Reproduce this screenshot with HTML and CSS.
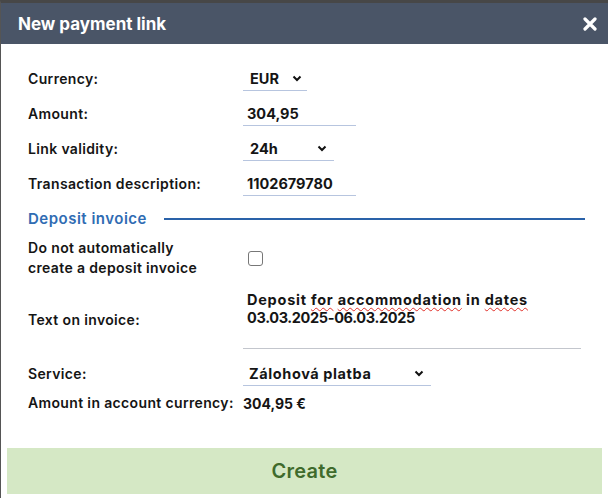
FILE: index.html
```html
<!DOCTYPE html>
<html lang="en">
<head>
<meta charset="utf-8">
<title>New payment link</title>
<link rel="stylesheet" href="styles.css">
</head>
<body>
<div class="modal">
  <header class="modal-head">
    <h1 class="modal-title">New payment link</h1>
    <button class="close" type="button" aria-label="Close">
      <svg width="14" height="14" viewBox="0 0 14 14"><path d="M2 2 L12 12 M12 2 L2 12" stroke="#fff" stroke-width="3.2" stroke-linecap="round"/></svg>
    </button>
  </header>
  <div class="modal-body">
    <div class="row row-first">
      <span class="label">Currency:</span>
      <div class="field select w-cur"><span>EUR</span><svg class="chev" width="10" height="7" viewBox="0 0 10 7"><path d="M1.5 1.5 L5 5 L8.5 1.5" fill="none" stroke="#111" stroke-width="2"/></svg></div>
    </div>
    <div class="row">
      <span class="label">Amount:</span>
      <div class="field input w-num"><span>304,95</span></div>
    </div>
    <div class="row">
      <span class="label">Link validity:</span>
      <div class="field select w-link"><span>24h</span><svg class="chev" width="10" height="7" viewBox="0 0 10 7"><path d="M1.5 1.5 L5 5 L8.5 1.5" fill="none" stroke="#111" stroke-width="2"/></svg></div>
    </div>
    <div class="row">
      <span class="label">Transaction description:</span>
      <div class="field input w-num"><span>1102679780</span></div>
    </div>
    <div class="section">
      <span class="section-title">Deposit invoice</span>
      <span class="section-line"></span>
    </div>
    <div class="row row-check">
      <span class="label">Do not automatically<br>create a deposit invoice</span>
      <span class="checkbox"></span>
    </div>
    <div class="row row-text">
      <span class="label">Text on invoice:</span>
      <div class="textarea"><span class="line-words">Deposit <u>for</u> <u>accommodation</u> in <u>dates</u></span><br><span class="line-dates">03.03.2025-06.03.2025</span></div>
    </div>
    <div class="row row-service">
      <span class="label">Service:</span>
      <div class="field select w-service"><span class="service-text">Zálohová platba</span><svg class="chev" width="10" height="7" viewBox="0 0 10 7"><path d="M1.5 1.5 L5 5 L8.5 1.5" fill="none" stroke="#111" stroke-width="2"/></svg></div>
    </div>
    <div class="row row-amount">
      <span class="label">Amount in account currency:</span>
      <span class="value">304,95 €</span>
    </div>
  </div>
  <div class="modal-foot">
    <button class="create" type="button">Create</button>
  </div>
</div>
</body>
</html>
```
FILE: styles.css
```css
* { box-sizing: border-box; }
html, body { margin: 0; padding: 0; background: #fff; }
body {
  font-family: "Inter", "Noto Sans", sans-serif;
  color: #151515;
  font-size: 14px;
}
.modal {
  width: 608px;
  height: 498px;
  border-top: 3px solid #474747;
  border-left: 1px solid #555;
  background: #fff;
  display: flex;
  flex-direction: column;
}
.modal-head {
  height: 41px;
  background: #4a5567;
  display: flex;
  align-items: center;
  justify-content: space-between;
  padding: 0 10px 0 17px;
}
.modal-title {
  margin: 0;
  color: #fff;
  font-size: 17px;
  font-weight: 700;
}
.close {
  border: 0;
  background: transparent;
  padding: 0;
  width: 16px;
  height: 16px;
  display: flex;
  align-items: center;
  justify-content: center;
}
.modal-body {
  padding: 22px 0 0 27px;
  display: flex;
  flex-direction: column;
}
.row {
  display: flex;
  align-items: center;
  margin-top: 10px;
}
.row-first { margin-top: 0; }
.label {
  width: 215px;
  flex: none;
  font-weight: 600;
  line-height: 20px;
  letter-spacing: 0.35px;
}
.field {
  height: 25px;
  border-bottom: 1px solid #b7c5df;
  display: flex;
  align-items: center;
  font-weight: 700;
  font-size: 14.5px;
}
.select { padding: 0 5px 0 7px; justify-content: space-between; }
.input { padding-left: 4px; }
.w-cur { width: 64px; }
.w-num { width: 113px; }
.w-link { width: 91px; padding-right: 7px; }
.w-service { width: 188px; padding-left: 6px; padding-right: 7px; }
.service-text { letter-spacing: 0.6px; }
.chev { flex: none; }
.section {
  margin-top: 12px;
  height: 20px;
  display: flex;
  align-items: center;
  padding-right: 23px;
}
.section-title {
  color: #2f6cb3;
  font-weight: 600;
  font-size: 15px;
  letter-spacing: 0.5px;
  white-space: nowrap;
}
.section-line {
  flex: 1;
  height: 2px;
  background: #2a62a9;
  margin-left: 17px;
  margin-top: 2px;
}
.checkbox {
  width: 15px;
  height: 15px;
  border: 1px solid #777;
  border-radius: 3px;
  margin-left: 5px;
  margin-top: 1px;
}
.row-text .label { margin-top: 3px; }
.textarea {
  width: 338px;
  height: 61px;
  border-bottom: 1px solid #c3c6cd;
  padding: 3px 0 0 4px;
  line-height: 18px;
  font-weight: 700;
  font-size: 14.5px;
}
.line-words { letter-spacing: 0.75px; }
.line-dates { letter-spacing: -0.35px; }
.textarea u {
  text-decoration: underline wavy #e0302a;
  text-decoration-thickness: 1px;
  text-underline-offset: 2px;
}
.row-service { margin-top: 12px; }
.row-amount { margin-top: 7px; }
.value { font-weight: 700; font-size: 14px; }
.modal-foot {
  margin-top: auto;
  padding: 0 6px 4px 6px;
}
.create {
  width: 100%;
  height: 46px;
  border: 0;
  background: #d5e8c5;
  color: #3f6b2c;
  font-family: "Inter", "Noto Sans", sans-serif;
  font-size: 20px;
  font-weight: 600;
  letter-spacing: 0.3px;
}
```
